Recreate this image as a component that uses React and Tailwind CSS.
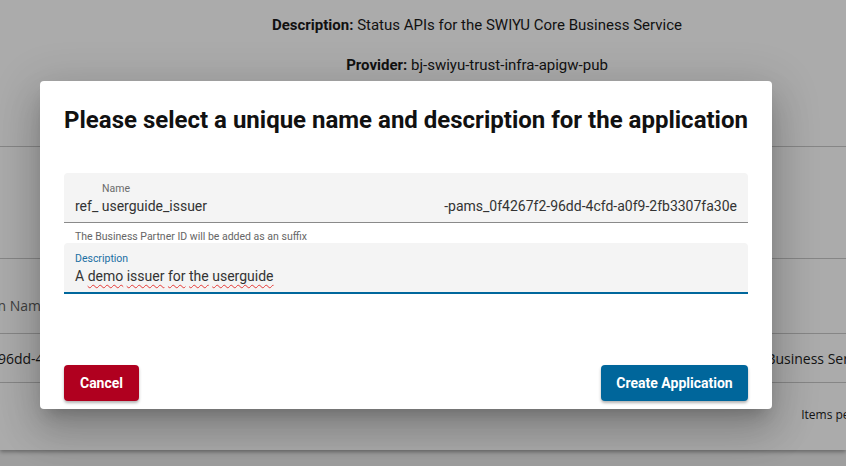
import React from 'react'

export default function App() {
  return (
    <div className="relative h-[466px] w-[846px] overflow-hidden bg-[#ececec] font-['Roboto',sans-serif]">
      <BackgroundPage />

      {/* Overlay */}
      <div className="absolute inset-0 flex items-start justify-start bg-black/[0.33] pl-[40px] pt-[81px]">
        <CreateDialog />
      </div>
    </div>
  )
}

function BackgroundPage() {
  return (
    <div className="h-[450px] bg-white shadow-[0_2px_4px_rgba(0,0,0,0.35)]">
      {/* Details */}
      <div className="flex h-[147px] flex-col items-center border-b border-[#c8c8c8] pl-[108px] pt-[15px] text-[15px] text-[#1a1a1a]">
        <div className="leading-[20px]">
          <span className="font-bold">Description:</span> Status APIs for the SWIYU Core Business Service
        </div>
        <div className="mt-[20px] leading-[20px]">
          <span className="font-bold">Provider:</span> bj-swiyu-trust-infra-apigw-pub
        </div>
      </div>

      <div className="h-[112px] border-b border-[#c8c8c8]" />

      {/* Table header */}
      <div className="flex h-[75px] items-center border-b border-[#c8c8c8] pt-[18px] text-[14px] text-[#5f5f5f] font-['Open_Sans',sans-serif]">
        <span className="ml-[-67px] whitespace-nowrap">Application Name</span>
      </div>

      {/* Table row */}
      <div className="flex h-[49px] items-center justify-between border-b border-[#c8c8c8] text-[14px] text-[#222] font-['Open_Sans',sans-serif]">
        <span className="ml-[-64px] whitespace-nowrap">0f4267f2-96dd-4cfd</span>
        <span className="mr-[-28px] whitespace-nowrap">Core Business Service</span>
      </div>

      {/* Pagination */}
      <div className="flex h-[66px] items-center justify-end text-[12px] text-[#222] font-['Open_Sans',sans-serif]">
        <span className="mr-[-42px] whitespace-nowrap pb-[2px]">Items per page:</span>
      </div>
    </div>
  )
}

function CreateDialog() {
  return (
    <div className="w-[732px] rounded-[4px] bg-white px-[24px] pb-[8px] pt-[23px] shadow-[0_11px_15px_-7px_rgba(0,0,0,0.2),0_24px_38px_3px_rgba(0,0,0,0.14),0_9px_46px_8px_rgba(0,0,0,0.12)]">
      <h2 className="text-[24px] font-bold leading-[32px] text-[#111]">
        Please select a unique name and description for the application
      </h2>

      {/* Name field */}
      <div className="mt-[37px] h-[50px] rounded-t-[4px] border-b border-[#8a8a8a] bg-[#f4f4f4] px-[11px] pt-[9px]">
        <div className="pl-[27px] text-[10.5px] leading-[14px] text-[#6b6b6b]">Name</div>
        <div className="flex justify-between text-[14px] leading-[20px] text-[#333]">
          <span>ref_ userguide_issuer</span>
          <span>-pams_0f4267f2-96dd-4cfd-a0f9-2fb3307fa30e</span>
        </div>
      </div>
      <div className="px-[11px] pt-[7px] text-[10.5px] leading-[13px] text-[#666]">
        The Business Partner ID will be added as an suffix
      </div>

      {/* Description field */}
      <div className="h-[51px] rounded-t-[4px] border-b-2 border-[#00679c] bg-[#f4f4f4] px-[11px] pt-[9px]">
        <div className="text-[10.5px] leading-[14px] text-[#1a6fa3]">Description</div>
        <div className="text-[14px] leading-[20px] text-[#333]">
          A{' '}
          {['demo', 'issuer', 'for', 'the', 'userguide'].map((w, i) => (
            <React.Fragment key={w}>
              <span className="underline decoration-[#e53935] decoration-wavy decoration-1 underline-offset-[3px]">{w}</span>
              {i < 4 ? ' ' : ''}
            </React.Fragment>
          ))}
        </div>
      </div>

      {/* Actions */}
      <div className="mt-[71px] flex items-center justify-between">
        <button className="h-[36px] w-[75px] rounded-[4px] bg-[#b0001f] text-[14px] font-bold text-white shadow-[0_2px_3px_rgba(0,0,0,0.3)]">
          Cancel
        </button>
        <button className="h-[36px] w-[147px] rounded-[4px] bg-[#00669b] text-[14px] font-bold text-white shadow-[0_2px_3px_rgba(0,0,0,0.3)]">
          Create Application
        </button>
      </div>
    </div>
  )
}
